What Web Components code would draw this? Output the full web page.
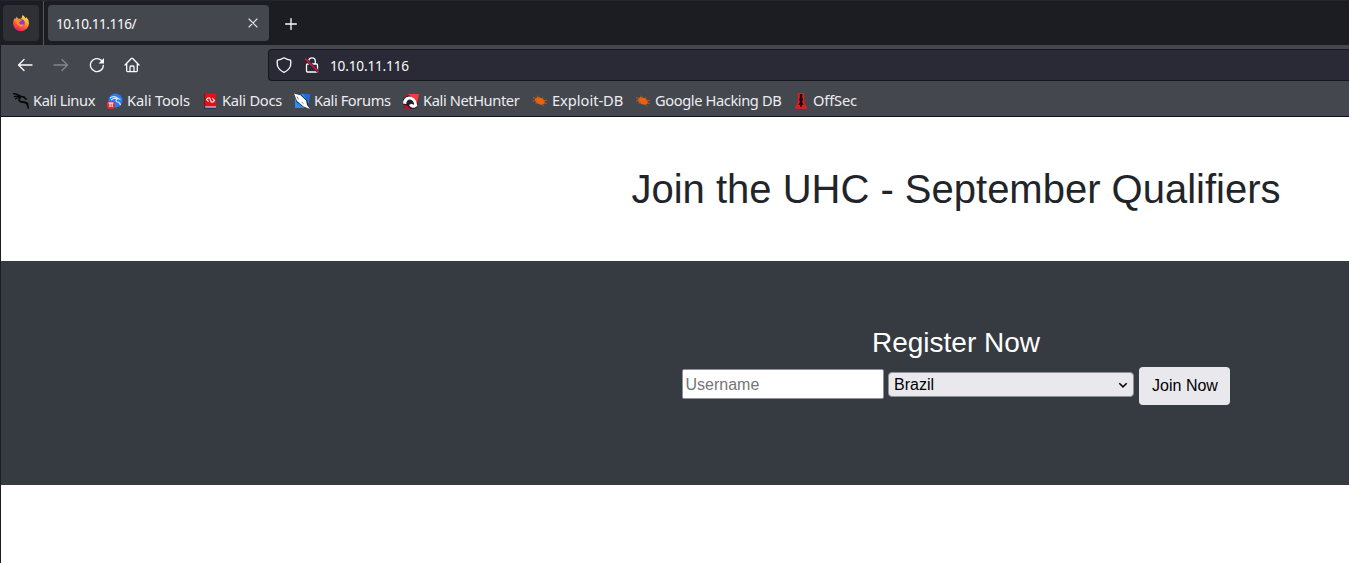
<!DOCTYPE html>
<html lang="en">
<head>
<meta charset="utf-8">
<title>10.10.11.116/</title>
<style>
html,body{margin:0;height:100%;overflow:hidden;background:#fff}
</style>
</head>
<body>
<browser-window></browser-window>
<script>
const define = (name, html) => customElements.define(name, class extends HTMLElement {
  constructor() {
    super();
    const t = document.createElement('template');
    t.innerHTML = html;
    this.attachShadow({mode: 'open'}).append(t.content.cloneNode(true));
  }
});

const icons = {
  firefox: `<svg width="18" height="18" viewBox="0 0 18 18"><defs><linearGradient id="a" x1=".8" y1="0" x2=".3" y2="1"><stop offset="0" stop-color="#fff04a"/><stop offset=".4" stop-color="#ffa12b"/><stop offset=".7" stop-color="#ff4b39"/><stop offset="1" stop-color="#ed1a68"/></linearGradient></defs><path fill="url(#a)" d="M10.7 1q2 1.2 2.7 3.2q1-.4.9-1.2q2.7 2.7 2.7 6.2a8 8 0 0 1-16 .1q0-3 1.8-5.2q.2.7.8 1q.1-1.7 1.4-2.3q-.1 1.3 1.4 2q2 .2 3.2-.5q.3-1.8 1.1-3.3z"/><circle cx="9" cy="9" r="3.8" fill="#8b3bd8"/><path fill="#ff8a2a" d="M4.3 6q2.3-1.7 4.7-.2l1 .8q-1.6.1-1.8.9q-1 .2-1.2 1.5q.5 1.5 2.5 1.4q1.5-.5 2.5.3q-1.2 2.6-4 2.1Q5 12 4.3 9z"/></svg>`,
  back: `<svg width="16" height="16" viewBox="0 0 16 16" fill="none" stroke="#fbfbfe" stroke-width="1.3" stroke-linecap="round" stroke-linejoin="round"><path d="M15 8H1.5M7 2.5L1.5 8L7 13.5"/></svg>`,
  forward: `<svg width="16" height="16" viewBox="0 0 16 16" fill="none" stroke="#85868b" stroke-width="1.3" stroke-linecap="round" stroke-linejoin="round"><path d="M1 8H14.5M9 2.5L14.5 8L9 13.5"/></svg>`,
  reload: `<svg width="16" height="16" viewBox="0 0 16 16" fill="none" stroke="#fbfbfe" stroke-width="1.35" stroke-linecap="round"><path d="M14.4 8.4A6.5 6.5 0 1 1 12.3 3.3L13.4 4.4"/><path fill="#fbfbfe" stroke="none" d="M15 1v5.2q0 .3-.3.3H9.6z"/></svg>`,
  home: `<svg width="16" height="16" viewBox="0 0 16 16" fill="none" stroke="#fbfbfe" stroke-width="1.3" stroke-linejoin="round" stroke-linecap="round"><path d="M1 8L7.3 1.5q.7-.6 1.4 0L15 8M2.7 6.8v7q0 .8.8.8h9q.8 0 .8-.8v-7M6 14.3V9.9q0-.9.9-.9h2.2q.9 0 .9.9v4.4"/></svg>`,
  shield: `<svg width="16" height="16" viewBox="0 0 16 16" fill="none" stroke="#fbfbfe" stroke-width="1.3" stroke-linejoin="round"><path d="M8 .8q3.400 2 6.600 2.400q.5 3.400-.3 6.200Q13 13 8 15.400Q3 13 1.700 9.400Q.9 6.600 1.400 3.200Q4.600 2.800 8 .8z"/></svg>`,
  lock: `<svg width="16" height="16" viewBox="0 0 16 16" fill="none" stroke="#fbfbfe" stroke-width="1.3"><path d="M4.700 7V4.200a3.300 3.300 0 0 1 6.600 0V7M3.500 7h9q1 0 1 1v6q0 1-1 1h-9q-1 0-1-1V8q0-1 1-1z"/><path stroke="#292a35" stroke-width="3" d="M2 2.500L14 14.500"/><path stroke="#e20f45" stroke-width="1.400" d="M1 1.500L14.500 15"/></svg>`,
  close: `<svg width="10" height="10" viewBox="0 0 10 10" stroke="#e8e8ec" stroke-width="1.100" stroke-linecap="round"><path d="M1 1l8 8M9 1L1 9"/></svg>`,
  plus: `<svg width="12" height="12" viewBox="0 0 12 12" stroke="#fbfbfe" stroke-width="1.300" stroke-linecap="round"><path d="M6 .6v10.800M.6 6h10.800"/></svg>`,
  linux: `<svg width="16" height="16" viewBox="0 0 16 16" fill="none" stroke="#050506"><path stroke-width="1.300" d="M0 .8Q4 .3 7.500 3.200M1 3.800Q4 2.500 7.800 4M2.200 6Q5 4 8 4.600"/><path stroke-width="1.600" d="M7 3.200q3.500.1 5.300 2.400l1.700.8M7.500 4.500q-2.500 2-.8 3.500q1.300 1 4 1.100q3.200.3 4 3.200q.4 1.500.8 3.200"/><path stroke-width=".8" d="M10 3.800l1.800-.3M13 10l2.500.3"/></svg>`,
  tools: `<svg width="16" height="16" viewBox="0 0 16 16"><circle cx="8.500" cy="7.500" r="7" fill="#287bf4"/><path d="M3 5q4-3 8 .5l2.500 1M4 7q4-3 6-.8q-2 1.500 0 2.500q3 .3 3.500 3.500" fill="none" stroke="#d6e7ff" stroke-width="1.100"/><rect y="8" width="8" height="7.800" rx="2.500" fill="#e72a33"/><path d="M1.500 10h5M3 10v4M5.200 10v4" stroke="#fff" stroke-width="1.100"/></svg>`,
  docs: `<svg width="16" height="16" viewBox="0 0 16 16"><path fill="#df1218" d="M2 .5h12v13.500H2z"/><path fill="#8d1218" d="M2 .5h1.300v13.500H2z"/><path fill="#eef1f4" d="M3 13.500h11v1.100H3z"/><path fill="#18386c" d="M2 13.700h1.300v1H14V16H2z"/><path fill="none" stroke="#fff" stroke-width="1.100" d="M6.600 4.500L4.500 6.600l2.100 2.100M10.400 5.300l2.100 2.100l-2.100 2.100M7.500 4.500l2 5"/></svg>`,
  forums: `<svg width="16" height="16" viewBox="0 0 16 16"><path fill="#258dff" d="M1 1H16l-2 14H1z"/><path fill="#216bd0" d="M10 1h6l-2.500 12z"/><path fill="#25282c" d="M0 0l7 1.500l6 6L16 16l-6-1.500L2.500 9z"/><path fill="#fff" d="M0 .5L6.500 2.200L12 7.500l1 4.500l3 4l-6.500-2.500L3 8z"/><path stroke="#2b3034" stroke-width=".6" d="M3 3.500l1.500 3M7.500 9l2 1.700"/></svg>`,
  nethunter: `<svg width="16" height="16" viewBox="0 0 16 16"><path fill="#202126" d="M0 6l4-4.500l3-.5l8 6v7l-4 2l-9-1l-2-4z"/><path fill="#f73b3f" d="M4 1h12l-2 10L9.500 4.500z"/><path fill="#b5152e" d="M1 11.500l3.500 1.500l3 3H2zM2 2h4L1.500 5z"/><path fill="#fff" d="M0 10.500Q.5 4 6 3.500q4.500 0 7 4.500l1.500 5l-3 1.800q-4 .2-5.500-2.800l2.500-1.200q1.500 1 2.700.4Q10.500 7.200 7 6.500Q3.500 6.500 3.200 11z"/></svg>`,
  bug: `<svg width="16" height="16" viewBox="0 0 16 16"><ellipse cx="7.900" cy="8" rx="5.200" ry="3.300" transform="rotate(24 7.900 8)" fill="#ee610b"/><path d="M5 6L1 4.500M5 7.500L1 8M7 5L5.400 2.700M10 6l1-1.800M11 8l4-.8M12 10l3 .4M10 11l2.300 2.300M6 9l-2.500 1.800" stroke="#c65a18" stroke-width=".9"/></svg>`,
  offsec: `<svg width="16" height="16" viewBox="0 0 16 16"><path fill="#e51b20" d="M4.800 0h6.400v9L14.500 15.800h-13L4.800 9z"/><path fill="#120c0e" d="M6.800 1h2.600l-.3 3l.8 2l-.8 3.500l1.600 2l-1.900.6l-.2 2H7.500l-.5-2l-1.800-.6l1.700-2l-.7-3.500l.7-2z"/></svg>`
};

customElements.define('ui-icon', class extends HTMLElement {
  connectedCallback() {
    if (!this.shadowRoot) this.attachShadow({mode: 'open'});
    this.shadowRoot.innerHTML = `<style>:host{display:flex;align-items:center;justify-content:center;flex:none}svg{display:block}</style>${icons[this.getAttribute('name')]}`;
  }
});

define('tab-strip', `<style>
:host{display:flex;height:44px;background:#1c1d22;border-top:1px solid #242530;box-sizing:content-box;border-bottom:0}
.pin{width:36px;height:36px;margin:4px 4px 0 2px;border-radius:4px;background:#2f3035}
.sep{width:1px;background:#55565b}
.tab{display:flex;align-items:center;justify-content:space-between;width:221px;height:36px;box-sizing:border-box;margin:4px 0 0 4px;padding:0 11px 0 7.500px;border-radius:4px;background:#44474e;color:#fbfbfe}
.label{transform:scaleX(.93);transform-origin:0 50%;letter-spacing:-.5px}
.plus{width:44px;height:44px;padding-top:1px;box-sizing:border-box}
</style><ui-icon class="pin" name="firefox"></ui-icon><span class="sep"></span><div class="tab"><span class="label"><slot></slot></span><ui-icon name="close"></ui-icon></div><ui-icon class="plus" name="plus"></ui-icon>`);

define('nav-bar', `<style>
:host{display:flex;align-items:center;height:40px;background:#44474e}
.buttons{display:flex;gap:19.800px;width:251px;padding-left:16px;box-sizing:content-box}
.url{display:flex;align-items:center;flex:1;height:32px;box-sizing:border-box;border:1px solid #16171c;border-right:0;border-radius:4px 0 0 4px;background:#292a35;color:#fbfbfe;padding-left:7px}
.label{transform:scaleX(.93);transform-origin:0 50%;letter-spacing:-.2px}
.lock{margin:0 9.500px 0 12px}
</style><div class="buttons"><ui-icon name="back"></ui-icon><ui-icon name="forward"></ui-icon><ui-icon name="reload"></ui-icon><ui-icon name="home"></ui-icon></div><div class="url"><ui-icon name="shield"></ui-icon><ui-icon class="lock" name="lock"></ui-icon><span class="label"><slot></slot></span></div>`);

define('bookmark-bar', `<style>:host{display:flex;gap:12px;align-items:center;height:31px;background:#44474e;border-bottom:1px solid #111216;padding-left:12px}</style><slot></slot>`);

customElements.define('bookmark-link', class extends HTMLElement {
  connectedCallback() {
    if (!this.shadowRoot) this.attachShadow({mode: 'open'});
    this.shadowRoot.innerHTML = `<style>:host{display:flex;gap:4px;align-items:center;flex:none;color:#ededf1}span{width:${this.getAttribute('width')}px;letter-spacing:${this.getAttribute('spacing') || '-.4'}px;white-space:nowrap;padding-bottom:2px}</style><ui-icon name="${this.getAttribute('icon')}"></ui-icon><span><slot></slot></span>`;
  }
});

define('page-title', `<style>:host{display:block;padding:48px 0;text-align:center}h1{margin:0;font-size:40px;line-height:48px;font-weight:400}</style><h1><slot></slot></h1>`);

define('register-form', `<style>
:host{display:block;height:224px;box-sizing:border-box;padding-top:65px;background:#363a41;color:#fff;text-align:center}
h3{margin:0 0 7px;font-size:28px;line-height:34px;font-weight:400}
form{display:flex;align-items:flex-start;justify-content:center;width:548px;margin:0 auto}
input,select,button{font:16px "Liberation Sans",Arial,sans-serif;box-sizing:border-box;margin:0;color:#000;outline:0}
input{width:202px;height:30px;margin-top:2px;padding:2px 2px 0 2.500px;border:1px solid #8f8f9d;border-radius:2px;background:#fff}
input::placeholder{color:#757575;opacity:1}
.pick{display:grid;width:246px;height:25px;margin:5px 5px 0 4px}
.pick>*{grid-area:1/1}
select{appearance:none;width:246px;height:25px;padding:0 5px;border:1px solid #8f8f9d;border-radius:4px;background:#e9e9ed;line-height:19px}
svg{justify-self:end;align-self:center;margin-right:6px;pointer-events:none}
button{width:91px;height:38px;padding:0 0 0 1px;border:0;border-radius:4px;background:#e9e9ed}
</style><h3>Register Now</h3><form><input placeholder="Username"><div class="pick"><select><option>Brazil</option></select><svg width="10" height="10" viewBox="0 0 10 10" fill="none" stroke="#000" stroke-width="1.500"><path d="M1.300 3.200L5 6.900L8.700 3.200"/></svg></div><button type="button">Join Now</button></form>`);

define('browser-window', `<style>
:host{display:block;box-sizing:border-box;width:100vw;height:100vh;overflow:hidden;border-left:1px solid #1c1d26;font:14.667px/20px "Noto Sans",sans-serif}
main{width:1910px;background:#fff;color:#212529;font-family:"Liberation Sans",Arial,sans-serif}
</style>
<tab-strip>10.10.11.116/</tab-strip><nav-bar>10.10.11.116</nav-bar>
<bookmark-bar>
<bookmark-link icon="linux" width="62">Kali Linux</bookmark-link>
<bookmark-link icon="tools" width="63" spacing="-.15">Kali Tools</bookmark-link>
<bookmark-link icon="docs" width="60" spacing="-.25">Kali Docs</bookmark-link>
<bookmark-link icon="forums" width="77">Kali Forums</bookmark-link>
<bookmark-link icon="nethunter" width="97">Kali NetHunter</bookmark-link>
<bookmark-link icon="bug" width="71" spacing="-.03">Exploit-DB</bookmark-link>
<bookmark-link icon="bug" width="126">Google Hacking DB</bookmark-link>
<bookmark-link icon="offsec" width="44" spacing="-.15">OffSec</bookmark-link>
</bookmark-bar>
<main><page-title>Join the UHC - September Qualifiers</page-title><register-form></register-form></main>`);
</script>
</body>
</html>
